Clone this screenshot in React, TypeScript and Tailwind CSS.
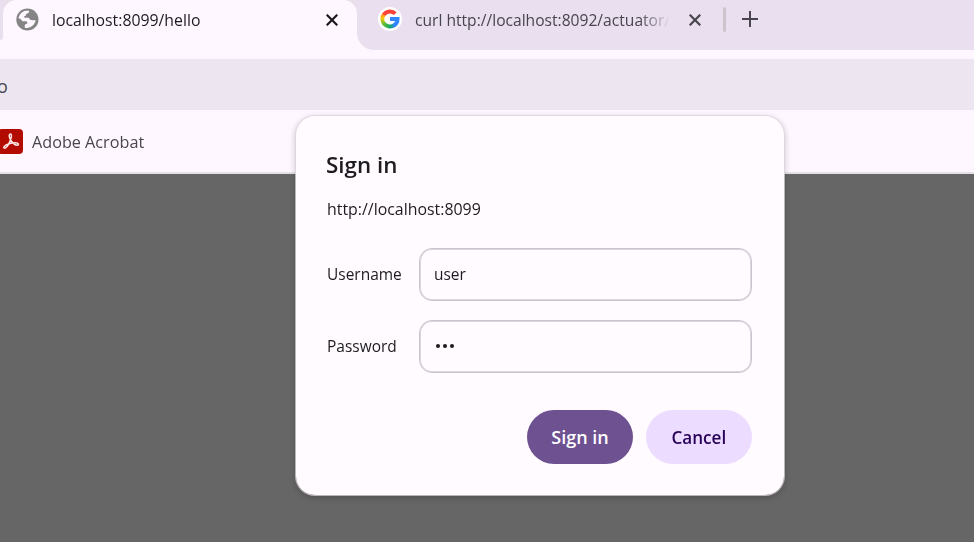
import type { ReactNode } from "react";

function Close({ className }: { className: string }) {
  return (
    <svg viewBox="0 0 12 12" className={className} fill="none" stroke="currentColor" strokeWidth="2.2">
      <path d="M.7 .7l10.6 10.6M11.3 .7L.7 11.3" />
    </svg>
  );
}

function Globe() {
  return (
    <svg viewBox="0 0 24 24" className="size-6 shrink-0">
      <circle cx="12.4" cy="12.5" r="11.1" fill="#858585" />
      <path fill="#fef7ff" d="M3.6 11.5C4 7.6 7 4.3 10.6 3.7l3.4.1c.3 1-.1 1.9-.9 2.3l-1.7.9c-.7.4-.2 1.2-.8 1.8-.5.5-1.5.2-1.6 1-.1.7.7.9 1.4.9H13c1.2 0 1.5 1.4 2.3 2.1.8.5 2.8.4 5.4.4-.5 2.2-1.6 4.2-3.3 5.6-2.3 1.8-4.9 2.5-7.6 1.9v-2.2c0-.9.7-1.3 1.5-1.4.9-.1 1.1-.8 1-1.5-.1-1-.9-1.4-1.8-1.4H8.3c-1.2 0-1.6-.7-2.1-1.5-.5-.8-1.3-1.1-2.6-1.2z" />
    </svg>
  );
}

function Google() {
  return (
    <svg viewBox="0 0 24 24" className="size-6" fill="none" strokeWidth="4">
      <defs>
        <linearGradient id="gl" x1="0" y1="0" x2="0" y2="1">
          <stop offset="0" stopColor="#ff8a1c" />
          <stop offset=".4" stopColor="#fbc60a" />
          <stop offset="1" stopColor="#6bc234" />
        </linearGradient>
        <linearGradient id="gb" x1="0" y1="0" x2="1" y2="0">
          <stop offset="0" stopColor="#62bf35" />
          <stop offset=".5" stopColor="#17a95b" />
          <stop offset="1" stopColor="#2d84f5" />
        </linearGradient>
      </defs>
      <circle cx="12" cy="12" r="12" fill="white" />
      <path stroke="url(#gl)" d="M6.2 7.1a7.6 7.6 0 0 0 0 9.8" />
      <path stroke="#fb4237" d="M5.8 7.6a7.6 7.6 0 0 1 11.5-1" />
      <path stroke="url(#gb)" d="M5.9 16.5a7.6 7.6 0 0 0 10.8 1.4" />
      <path stroke="#3186ff" d="M12 12.1h7.5a7.6 7.6 0 0 1-3.4 6.2" />
    </svg>
  );
}

function Acrobat() {
  return (
    <svg viewBox="0 0 24 24" className="size-6" fill="none" stroke="#ffe9e7" strokeWidth="1.5" strokeLinejoin="round">
      <path d="M10.9 5.2c1.5-.7 2 1.3 1.1 4.1-.9 3-3.2 8.2-5.5 9.6-1.2.7-2.3-.3-1.5-1.3 1.6-2 7.7-4.1 11.7-3.9 2.8.1 3.6 2.3 1.6 2.5-2.8.2-6.5-4-7.6-7.2-.6-1.8-.6-3.4.2-3.8z" />
    </svg>
  );
}

function Field({ label, children }: { label: string; children: ReactNode }) {
  return (
    <label className="flex h-[53px] items-center">
      <span className="w-[93px] shrink-0 pb-0.5 pl-[0.5px]"><span className="inline-block origin-left scale-x-[0.91]">{label}</span></span>
      <span className="flex h-full flex-1 items-center rounded-[13px] border border-[#cac4cd] pb-0.5 pl-3.5 shadow-[inset_0_0_0_1px_#dcd6df]">{children}</span>
    </label>
  );
}

function Dot() {
  return <i className="size-1 rounded-full bg-current" />;
}

export default function App() {
  return (
    <div className="relative flex h-[542px] w-[974px] flex-col overflow-hidden bg-[#666666] font-['Open_Sans','Noto_Sans',sans-serif] text-[17px] leading-6 text-[#1d1b20]">
      <div className="flex h-[50px] shrink-0 bg-[#fef7ff]">
        <div className="h-10 w-[3px] rounded-br-[3px] bg-[#e9dfee]" />
        <div className="w-[354px] bg-[#e9dfee]">
          <div className="flex h-[50px] items-start rounded-t-[14px] bg-[#fef7ff] pl-3 pt-2">
            <span className="-mt-[1px]"><Globe /></span>
            <span className="ml-[13px] w-[274px]"><span className="inline-block origin-left scale-x-[0.93]">localhost:8099/hello</span></span>
            <Close className="mt-1.5 size-3" />
          </div>
        </div>
        <div className="flex flex-1 items-start rounded-bl-[17px] bg-[#e9dfee] pl-[21px] pt-2 text-[#49454e]">
          <span className="-mt-px"><Google /></span>
          <span className="ml-[13px] w-[255px] whitespace-nowrap [mask-image:linear-gradient(to_right,black_88%,transparent)]"><span className="inline-block origin-left scale-x-[0.918]">curl http://localhost:8092/actuator/</span></span>
          <Close className="ml-[19px] mt-1.5 size-3" />
          <span className="ml-[22px] -mt-px h-[25px] w-[3px] rounded-full bg-[#cbc4cf]" />
          <svg viewBox="0 0 16 16" className="ml-4 mt-[3px] size-4" stroke="currentColor" strokeWidth="2"><path d="M8 0v16M0 8h16" /></svg>
        </div>
      </div>
      <div className="h-[9px] shrink-0 bg-[#fef7ff]" />
      <div className="flex h-[51px] shrink-0 items-center bg-[#ede6f1] pt-0.5">
        <span className="-ml-[3px] text-[18px] text-[#49454e]">o</span>
      </div>
      <div className="flex h-16 shrink-0 items-center border-b-2 border-[#e6dfe8] bg-[#fef7ff]">
        <span className="-ml-0.5 flex size-[25px] items-center justify-center rounded bg-[#b30b00]"><Acrobat /></span>
        <span className="ml-[9px] mt-px"><span className="inline-block origin-left scale-x-[0.953] text-[#49454e]">Adobe Acrobat</span></span>
      </div>
      <div className="absolute left-[295px] top-[115px] flex h-[381px] w-[490px] flex-col rounded-[20px] border border-[#ddd4e0]/75 bg-[#fffbff] bg-clip-padding pl-[30px] pr-8 pt-[31px] shadow-[0_2px_6px_rgba(0,0,0,0.2)]">
        <h1 className="text-[22px] font-semibold leading-8"><span className="inline-block origin-left scale-x-[1.017] pt-px">Sign in</span></h1>
        <p className="mt-[17px] pl-[0.5px]"><span className="inline-block origin-left scale-x-[0.935]">http://localhost:8099</span></p>
        <div className="mt-[27px] flex flex-col gap-[19px]">
          <Field label="Username"><span className="inline-block origin-left scale-x-[0.91]">user</span></Field>
          <Field label="Password"><span className="ml-[2px] mt-px flex gap-[3px]"><Dot /><Dot /><Dot /></span></Field>
        </div>
        <div className="mt-[37px] flex justify-end gap-[13px] font-semibold">
          <button className="h-[54px] w-[106px] rounded-full bg-[#6e5191] pb-px text-[18px] text-white">Sign in</button>
          <button className="h-[54px] w-[106px] rounded-full bg-[#ecdcff] pb-px text-[18px] text-[#270057]"><span className="inline-block scale-x-[0.95]">Cancel</span></button>
        </div>
      </div>
    </div>
  );
}
